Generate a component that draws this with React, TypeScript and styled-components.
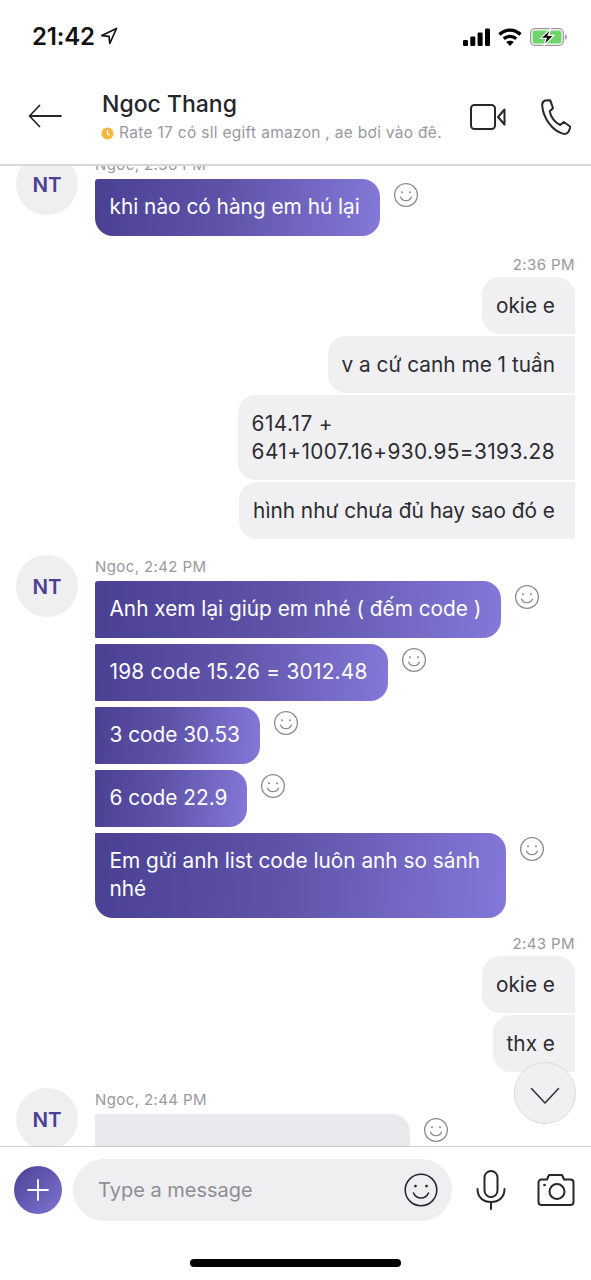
import React from "react"
import styled, { createGlobalStyle } from "styled-components"

const GlobalStyle = createGlobalStyle`
  html, body {
    margin: 0;
    padding: 0;
    background: #fff;
  }
  * {
    box-sizing: border-box;
  }
`

type Corner = "single" | "first" | "middle" | "last"

const Smile = ({ size = 26, stroke = "#8b8b8f", width = 1.3 }: { size?: number; stroke?: string; width?: number }) => (
  <svg width={size} height={size} viewBox="0 0 26 26" fill="none" stroke={stroke} strokeWidth={width}>
    <circle cx="13" cy="13" r="11.4" />
    <circle cx="9" cy="10.2" r="1" fill={stroke} stroke="none" />
    <circle cx="17" cy="10.2" r="1" fill={stroke} stroke="none" />
    <path d="M7.6 15.2c1.2 2.4 3.2 3.5 5.4 3.5s4.2-1.1 5.4-3.5" strokeLinecap="round" />
  </svg>
)

const App = () => (
  <Page>
    <GlobalStyle />
    <StatusBar>
      <Clock>
        21:42
        <svg width="18" height="18" viewBox="0 0 18 18" fill="none" stroke="#111" strokeWidth="1.7" strokeLinejoin="round">
          <path d="M16.500 1.500 1.800 8.600l7.200.7.800 7.200z" />
        </svg>
      </Clock>
      <StatusIcons>
        <svg width="27" height="18" viewBox="0 0 27 18" fill="#000">
          <rect x="0" y="12" width="5" height="6" rx="1.2" />
          <rect x="7.3" y="8.5" width="5" height="9.5" rx="1.2" />
          <rect x="14.6" y="4.5" width="5" height="13.5" rx="1.2" />
          <rect x="22" y="0.5" width="5" height="17.5" rx="1.2" />
        </svg>
        <svg width="24" height="18" viewBox="0 0 24 18" fill="none" stroke="#000" strokeWidth="3.400">
          <path d="M1.500 6.500C7.500.6 16.500.6 22.500 6.500" />
          <path d="M5.800 10.800c3.600-3.300 8.800-3.300 12.400 0" />
          <path d="M12 18 8.200 14c2.200-1.800 5.400-1.800 7.600 0z" fill="#000" stroke="none" />
        </svg>
        <svg width="37" height="18" viewBox="0 0 37 18" fill="none">
          <rect x="0.7" y="0.7" width="32.600" height="16.600" rx="4" stroke="#9a9a9a" strokeWidth="1.300" />
          <rect x="2.600" y="2.600" width="28.800" height="12.800" rx="2" fill="#6fd46b" />
          <path d="M35 6.200c1.200.4 1.800 1.400 1.800 2.800s-.6 2.400-1.800 2.800z" fill="#9a9a9a" />
          <path d="M21 0.500 10.500 10.400h5.700l-2.400 7.300 10.200-10.300h-5.800z" fill="#111" stroke="#fff" strokeWidth="1.200" />
        </svg>
      </StatusIcons>
    </StatusBar>

    <Header>
      <BackButton>
        <svg width="34" height="24" viewBox="0 0 34 24" fill="none" stroke="#26262b" strokeWidth="1.800" strokeLinecap="round" strokeLinejoin="round">
          <path d="M33 12H1.500M11.500 1.500 1.500 12l10 10.500" />
        </svg>
      </BackButton>
      <Title>
        <Name>Ngoc Thang</Name>
        <Status>
          <svg width="13" height="13" viewBox="0 0 13 13">
            <circle cx="6.500" cy="6.500" r="6" fill="#efb940" />
            <path d="M6.500 3v3.800l2.200 1.400" fill="none" stroke="#fff" strokeWidth="1.200" />
          </svg>
          Rate 17 có sll egift amazon , ae bơi vào đê.
        </Status>
      </Title>
      <HeaderActions>
        <svg width="36" height="26" viewBox="0 0 36 26" fill="none" stroke="#26262b" strokeWidth="2" strokeLinejoin="round">
          <rect x="1" y="1" width="24" height="24" rx="3.500" />
          <path d="M34.500 5.500 28 13l6.500 7.500z" />
        </svg>
        <svg width="30" height="36" viewBox="0 0 30 36" fill="none" stroke="#26262b" strokeWidth="2" strokeLinejoin="round">
          <path d="M4 1.500 9.200 1.200l2.800 8-3.300 3c.8 5.700 5.300 11.300 10.500 13.800l3.600-3 6.700 4.800-1.800 4.700c-1.300 2.200-3.600 2.800-5.900 2.100C11.500 31.800 2.300 19.600 1.200 6.700 1 4.200 2.200 2.300 4 1.500z" />
        </svg>
      </HeaderActions>
    </Header>

    <Messages>
      <Incoming $top={-13}>
        <Avatar>NT</Avatar>
        <IncomingBody>
          <Sender>Ngoc, 2:36 PM</Sender>
          <BubbleRow>
            <InBubble $corner="single">khi nào có hàng em hú lại</InBubble>
            <Reaction><Smile /></Reaction>
          </BubbleRow>
        </IncomingBody>
      </Incoming>

      <Outgoing $top={17}>
        <SentTime>2:36 PM</SentTime>
        <OutBubble $corner="first">okie e</OutBubble>
        <OutBubble $corner="middle">v a cứ canh me 1 tuần</OutBubble>
        <OutBubble $corner="middle" $tracking={0.42}>
          614.17 +<br />
          641+1007.16+930.95=3193.28
        </OutBubble>
        <OutBubble $corner="last">hình như chưa đủ hay sao đó e</OutBubble>
      </Outgoing>

      <Incoming $top={16}>
        <Avatar>NT</Avatar>
        <IncomingBody>
          <Sender>Ngoc, 2:42 PM</Sender>
          <BubbleRow>
            <InBubble $corner="first">Anh xem lại giúp em nhé ( đếm code )</InBubble>
            <Reaction><Smile /></Reaction>
          </BubbleRow>
          <BubbleRow>
            <InBubble $corner="middle" $tracking={0.25}>198 code 15.26 = 3012.48</InBubble>
            <Reaction><Smile /></Reaction>
          </BubbleRow>
          <BubbleRow>
            <InBubble $corner="middle">3 code 30.53</InBubble>
            <Reaction><Smile /></Reaction>
          </BubbleRow>
          <BubbleRow>
            <InBubble $corner="middle">6 code 22.9</InBubble>
            <Reaction><Smile /></Reaction>
          </BubbleRow>
          <BubbleRow>
            <InBubble $corner="last">Em gửi anh list code luôn anh so sánh nhé</InBubble>
            <Reaction><Smile /></Reaction>
          </BubbleRow>
        </IncomingBody>
      </Incoming>

      <Outgoing $top={14}>
        <SentTime>2:43 PM</SentTime>
        <OutBubble $corner="first">okie e</OutBubble>
        <OutBubble $corner="last">thx e</OutBubble>
      </Outgoing>

      <Incoming $top={16}>
        <Avatar>NT</Avatar>
        <IncomingBody>
          <Sender>Ngoc, 2:44 PM</Sender>
          <BubbleRow>
            <Pending />
            <Reaction><Smile /></Reaction>
          </BubbleRow>
        </IncomingBody>
      </Incoming>

      <ScrollDown>
        <svg width="30" height="18" viewBox="0 0 30 18" fill="none" stroke="#33333a" strokeWidth="1.600" strokeLinecap="round" strokeLinejoin="round">
          <path d="M1.500 1.500 15 16 28.500 1.500" />
        </svg>
      </ScrollDown>
    </Messages>

    <Composer>
      <AddButton>
        <svg width="22" height="22" viewBox="0 0 22 22" stroke="#fff" strokeWidth="1.800" strokeLinecap="round">
          <path d="M11 1v20M1 11h20" />
        </svg>
      </AddButton>
      <InputPill>
        <Placeholder>Type a message</Placeholder>
        <Smile size={36} stroke="#26262b" width={1.100} />
      </InputPill>
      <ComposerActions>
        <svg width="30" height="40" viewBox="0 0 30 40" fill="none" stroke="#26262b" strokeWidth="2" strokeLinecap="round">
          <rect x="8.500" y="1" width="13" height="26" rx="6.500" />
          <path d="M1.500 19c0 8.500 6 13 13.500 13s13.500-4.500 13.500-13M15 32v7" />
        </svg>
        <svg width="38" height="34" viewBox="0 0 38 34" fill="none" stroke="#26262b" strokeWidth="2" strokeLinejoin="round">
          <path d="M4.500 6.500h5.500l2-4.500h13l2 4.500h6.500a3 3 0 0 1 3 3v19.500a3 3 0 0 1-3 3h-29a3 3 0 0 1-3-3V9.500a3 3 0 0 1 3-3z" />
          <circle cx="20" cy="18.500" r="7.500" />
          <circle cx="7.500" cy="12" r="1.300" fill="#26262b" stroke="none" />
        </svg>
      </ComposerActions>
    </Composer>

    <HomeArea>
      <HomeBar />
    </HomeArea>
  </Page>
)

const Page = styled.div`
  display: flex;
  flex-direction: column;
  width: 591px;
  height: 1280px;
  overflow: hidden;
  background: #fff;
  font-family: Inter, "Liberation Sans", sans-serif;
  color: #26262b;
`

const StatusBar = styled.div`
  display: flex;
  align-items: center;
  justify-content: space-between;
  height: 72px;
  padding: 0 24px 0 32px;
`

const Clock = styled.div`
  display: flex;
  align-items: center;
  gap: 5px;
  font-size: 24px;
  font-weight: 600;
  letter-spacing: -0.2px;
  color: #111;
`

const StatusIcons = styled.div`
  display: flex;
  align-items: center;
  gap: 8px;
  margin-top: 1px;
`

const Header = styled.header`
  display: flex;
  align-items: center;
  height: 94px;
  padding: 0 20px 6px 28px;
  border-bottom: 2px solid #d8d8da;
`

const BackButton = styled.div`
  display: flex;
  width: 74px;
  margin-top: 2px;
`

const Title = styled.div`
  display: flex;
  flex-direction: column;
  flex: 1;
  gap: 4px;
  padding-top: 3px;
`

const Name = styled.div`
  font-size: 23px;
  font-weight: 500;
  line-height: 29px;
  color: #26262b;
`

const Status = styled.div`
  display: flex;
  align-items: center;
  gap: 5px;
  margin-left: -1px;
  font-size: 15.5px;
  line-height: 20px;
  letter-spacing: 0.3px;
  white-space: nowrap;
  color: #98989e;
`

const HeaderActions = styled.div`
  display: flex;
  align-items: center;
  gap: 35px;
  margin-top: 4px;
`

const Messages = styled.main`
  position: relative;
  flex: 1;
  min-height: 0;
  overflow: hidden;
`

const Incoming = styled.section<{ $top: number }>`
  display: flex;
  gap: 17px;
  margin-top: ${(p) => p.$top}px;
  padding-left: 16px;
`

const Avatar = styled.div`
  display: flex;
  align-items: center;
  justify-content: center;
  flex: none;
  width: 62px;
  height: 62px;
  border-radius: 50%;
  background: #efeff2;
  font-size: 20.5px;
  font-weight: 600;
  color: #4a4094;
`

const IncomingBody = styled.div`
  display: flex;
  flex-direction: column;
  gap: 6px;
`

const Sender = styled.div`
  height: 20px;
  font-size: 15px;
  line-height: 24px;
  letter-spacing: 0.4px;
  color: #98989e;
`

const BubbleRow = styled.div`
  display: flex;
  align-items: flex-start;
  gap: 13px;
`

const radius = (corner: Corner, side: "in" | "out") => {
  const r = "18px"
  const s = "1px"
  if (side === "in") {
    if (corner === "single") return `3px ${r} ${r} ${r}`
    if (corner === "first") return `3px ${r} ${r} ${s}`
    if (corner === "middle") return `${s} ${r} ${r} ${s}`
    return `${s} ${r} ${r} ${r}`
  }
  if (corner === "first") return `${r} ${r} ${s} ${r}`
  if (corner === "middle") return `${r} ${s} ${s} ${r}`
  return `${r} ${s} ${s} ${r}`
}

const InBubble = styled.div<{ $corner: Corner; $tracking?: number }>`
  max-width: 411px;
  padding: 14px 20px 15px 14.5px;
  border-radius: ${(p) => radius(p.$corner, "in")};
  background: linear-gradient(95deg, #4a4094 0%, #5e53a8 45%, #8478d8 100%);
  font-size: 20.8px;
  letter-spacing: ${(p) => p.$tracking ?? 0}px;
  line-height: 28px;
  color: #fff;
`

const Pending = styled.div`
  width: 315px;
  height: 60px;
  border-radius: 1px 18px 0 0;
  background: #e9eaed;
`

const Reaction = styled.div`
  display: flex;
  flex: none;
  margin-top: 3px;
`

const Outgoing = styled.section<{ $top: number }>`
  display: flex;
  flex-direction: column;
  align-items: flex-end;
  gap: 2px;
  margin-top: ${(p) => p.$top}px;
  padding-right: 16px;
`

const SentTime = styled.div`
  height: 22px;
  font-size: 15px;
  line-height: 24px;
  letter-spacing: 0.4px;
  color: #98989e;
`

const OutBubble = styled.div<{ $corner: Corner; $tracking?: number }>`
  padding: 14.5px 20px 14.5px 14px;
  border-radius: ${(p) => radius(p.$corner, "out")};
  background: #f0f0f3;
  font-size: 20.8px;
  letter-spacing: ${(p) => p.$tracking ?? 0}px;
  line-height: 28px;
  color: #2c2c31;
`

const ScrollDown = styled.div`
  position: absolute;
  top: 896px;
  right: 15px;
  display: flex;
  align-items: center;
  justify-content: center;
  width: 62px;
  height: 62px;
  padding-top: 5px;
  border: 1px solid #dcdcde;
  border-radius: 50%;
  background: #f0f0f3;
`

const Composer = styled.div`
  display: flex;
  align-items: center;
  height: 88px;
  padding: 0 16px 2px 14px;
  border-top: 1px solid #cfcfd3;
`

const AddButton = styled.div`
  display: flex;
  align-items: center;
  justify-content: center;
  flex: none;
  width: 48px;
  height: 48px;
  border-radius: 50%;
  background: linear-gradient(135deg, #4a4094 0%, #8075d4 100%);
`

const InputPill = styled.div`
  display: flex;
  align-items: center;
  justify-content: space-between;
  width: 379px;
  height: 62px;
  margin-left: 11px;
  padding: 0 13px 0 25px;
  border-radius: 31px;
  background: #efeff2;
`

const Placeholder = styled.span`
  font-size: 20px;
  color: #8e8e93;
`

const ComposerActions = styled.div`
  display: flex;
  align-items: center;
  justify-content: space-between;
  flex: 1;
  padding-left: 24px;
`

const HomeArea = styled.div`
  display: flex;
  justify-content: center;
  height: 46px;
  padding-top: 25px;
`

const HomeBar = styled.div`
  width: 211px;
  height: 8px;
  border-radius: 4px;
  background: #000;
`

export default App
